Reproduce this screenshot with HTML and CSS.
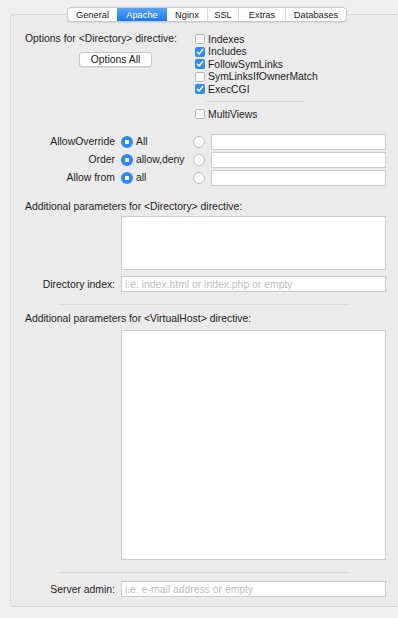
FILE: index.html
```html
<!DOCTYPE html>
<html lang="en">
<head>
    <meta charset="UTF-8">
    <title>Apache settings</title>
    <link rel="stylesheet" href="styles.css">
</head>
<body>
    <div class="tabs">
        <span class="tab tab-general">General</span>
        <span class="tab tab-apache active">Apache</span>
        <span class="tab tab-nginx">Nginx</span>
        <span class="tab tab-ssl">SSL</span>
        <span class="tab tab-extras">Extras</span>
        <span class="tab tab-db">Databases</span>
    </div>

    <div class="panel">
        <div class="options">
            <div class="options-left">
                <div class="label">Options for &lt;Directory&gt; directive:</div>
                <button class="btn">Options All</button>
            </div>
            <div class="checks">
                <div class="check"><span class="box"></span>Indexes</div>
                <div class="check"><span class="box on"></span>Includes</div>
                <div class="check"><span class="box on"></span>FollowSymLinks</div>
                <div class="check"><span class="box"></span>SymLinksIfOwnerMatch</div>
                <div class="check"><span class="box on"></span>ExecCGI</div>
                <div class="check-sep"><span></span></div>
                <div class="check"><span class="box"></span>MultiViews</div>
            </div>
        </div>

        <div class="radios">
            <div class="radio-row">
                <span class="row-label">AllowOverride</span>
                <span class="radio on"></span>
                <span class="radio-text">All</span>
                <span class="radio"></span>
                <span class="field"></span>
            </div>
            <div class="radio-row">
                <span class="row-label">Order</span>
                <span class="radio on"></span>
                <span class="radio-text">allow,deny</span>
                <span class="radio"></span>
                <span class="field"></span>
            </div>
            <div class="radio-row">
                <span class="row-label">Allow from</span>
                <span class="radio on"></span>
                <span class="radio-text">all</span>
                <span class="radio"></span>
                <span class="field"></span>
            </div>
        </div>

        <div class="label dir-label">Additional parameters for &lt;Directory&gt; directive:</div>
        <div class="area dir-area"></div>

        <div class="field-row index-row">
            <span class="row-label">Directory index:</span>
            <span class="field wide placeholder">i.e. index.html or index.php or empty</span>
        </div>

        <div class="sep"></div>

        <div class="label vhost-label">Additional parameters for &lt;VirtualHost&gt; directive:</div>
        <div class="area vhost-area"></div>

        <div class="sep"></div>

        <div class="field-row admin-row">
            <span class="row-label">Server admin:</span>
            <span class="field wide placeholder">i.e. e-mail address or empty</span>
        </div>
    </div>
</body>
</html>
```

FILE: styles.css
```css
body {
    margin: 0;
    width: 398px;
    height: 618px;
    overflow: hidden;
    background: #efefef;
    font-family: "Liberation Sans", Arial, sans-serif;
    font-size: 10.4px;
    color: #1e1e1e;
}

/* Tab strip */
.tabs {
    display: flex;
    position: relative;
    z-index: 1;
    margin: 7px 0 0 67px;
    width: 280px;
    height: 15px;
    box-sizing: border-box;
    background: #fff;
    border: 1px solid #c9c9c9;
    border-radius: 4px;
    box-shadow: 0 1px 1px rgba(0, 0, 0, 0.08);
    overflow: hidden;
}
.tab {
    display: flex;
    align-items: center;
    justify-content: center;
    font-size: 9.3px;
    color: #222;
    border-left: 1px solid #dcdcdc;
    box-sizing: border-box;
}
.tab:first-child {
    border-left: none;
}
.tab.active {
    background: linear-gradient(to bottom, #58a4fb, #1a78f3);
    color: #fff;
    border-left: none;
}
.tab.active + .tab {
    border-left: none;
}
.tab-general { width: 49px; }
.tab-apache { width: 50px; }
.tab-nginx { width: 40px; }
.tab-ssl { width: 31px; }
.tab-extras { width: 47px; }
.tab-db { width: 61px; }

/* Panel */
.panel {
    margin: -8px 0 0 10px;
    height: 593px;
    box-sizing: border-box;
    background: #ebebeb;
    border: 1px solid #dadada;
    border-right: none;
    border-radius: 4px 0 0 4px;
    padding: 18px 0 0 14px;
}
.label {
    line-height: 13px;
    white-space: nowrap;
}

/* Options block */
.options {
    display: flex;
}
.options-left {
    width: 170px;
}
.options-left .label {
    line-height: 12.5px;
}
.btn {
    display: block;
    margin: 6px 0 0 54px;
    width: 73px;
    height: 15px;
    padding: 0;
    background: #fff;
    border: 1px solid #c8c8c8;
    border-radius: 3px;
    box-shadow: 0 1px 0 rgba(0, 0, 0, 0.06);
    font-family: inherit;
    font-size: 10.4px;
    color: #222;
}
.checks {
    display: flex;
    flex-direction: column;
}
.check {
    display: flex;
    align-items: center;
    height: 12.5px;
    white-space: nowrap;
}
.box {
    width: 10px;
    height: 10px;
    box-sizing: border-box;
    margin-right: 3px;
    background: #fff;
    border: 1px solid #b8b8b8;
    border-radius: 2px;
}
.box.on {
    border: none;
    background: #2f8cf6 url("data:image/svg+xml,%3Csvg xmlns='http://www.w3.org/2000/svg' viewBox='0 0 10 10'%3E%3Cpath d='M2.3 5.2 L4.1 7.1 L7.8 2.6' fill='none' stroke='white' stroke-width='1.5' stroke-linecap='round' stroke-linejoin='round'/%3E%3C/svg%3E") no-repeat center / 10px 10px;
}
.check-sep {
    display: flex;
    align-items: center;
    height: 12.5px;
    padding-left: 11px;
}
.check-sep span {
    width: 99px;
    height: 1px;
    background: #dadada;
}

/* Radio rows */
.radios {
    display: flex;
    flex-direction: column;
    gap: 2px;
    margin-top: 13px;
}
.radio-row,
.field-row {
    display: flex;
    align-items: center;
    height: 16px;
}
.row-label {
    width: 90px;
    margin-right: 6px;
    text-align: right;
    white-space: nowrap;
    flex-shrink: 0;
}
.radio {
    width: 12px;
    height: 12px;
    box-sizing: border-box;
    border-radius: 50%;
    background: #fff;
    border: 1px solid #bdbdbd;
    flex-shrink: 0;
}
.radio.on {
    border: none;
    background: radial-gradient(circle, #fff 0 2px, #2a89f5 2.5px);
}
.radio-text {
    width: 60px;
    padding-left: 3px;
    box-sizing: border-box;
    flex-shrink: 0;
}
.field {
    width: 175px;
    height: 16px;
    margin-left: 6px;
    box-sizing: border-box;
    background: #fff;
    border: 1px solid #cdcdcd;
    flex-shrink: 0;
}
.field.wide {
    width: 265px;
    margin-left: 0;
    height: 15.5px;
    display: flex;
    align-items: center;
    padding-left: 3px;
}
.placeholder {
    color: #c0c0c0;
    white-space: nowrap;
}

/* Text areas and separators */
.dir-label {
    margin-top: 14px;
}
.area {
    width: 265px;
    margin-left: 96px;
    box-sizing: border-box;
    background: #fff;
    border: 1px solid #cdcdcd;
}
.dir-area {
    height: 54.5px;
    margin-top: 3px;
}
.index-row {
    margin-top: 6px;
}
.sep {
    width: 290px;
    height: 1px;
    margin: 12px 0 0 34px;
    background: #dcdcdc;
}
.vhost-label {
    margin-top: 6.5px;
}
.vhost-area {
    height: 230px;
    margin-top: 5.5px;
}
.admin-row {
    margin-top: 8px;
}
```
